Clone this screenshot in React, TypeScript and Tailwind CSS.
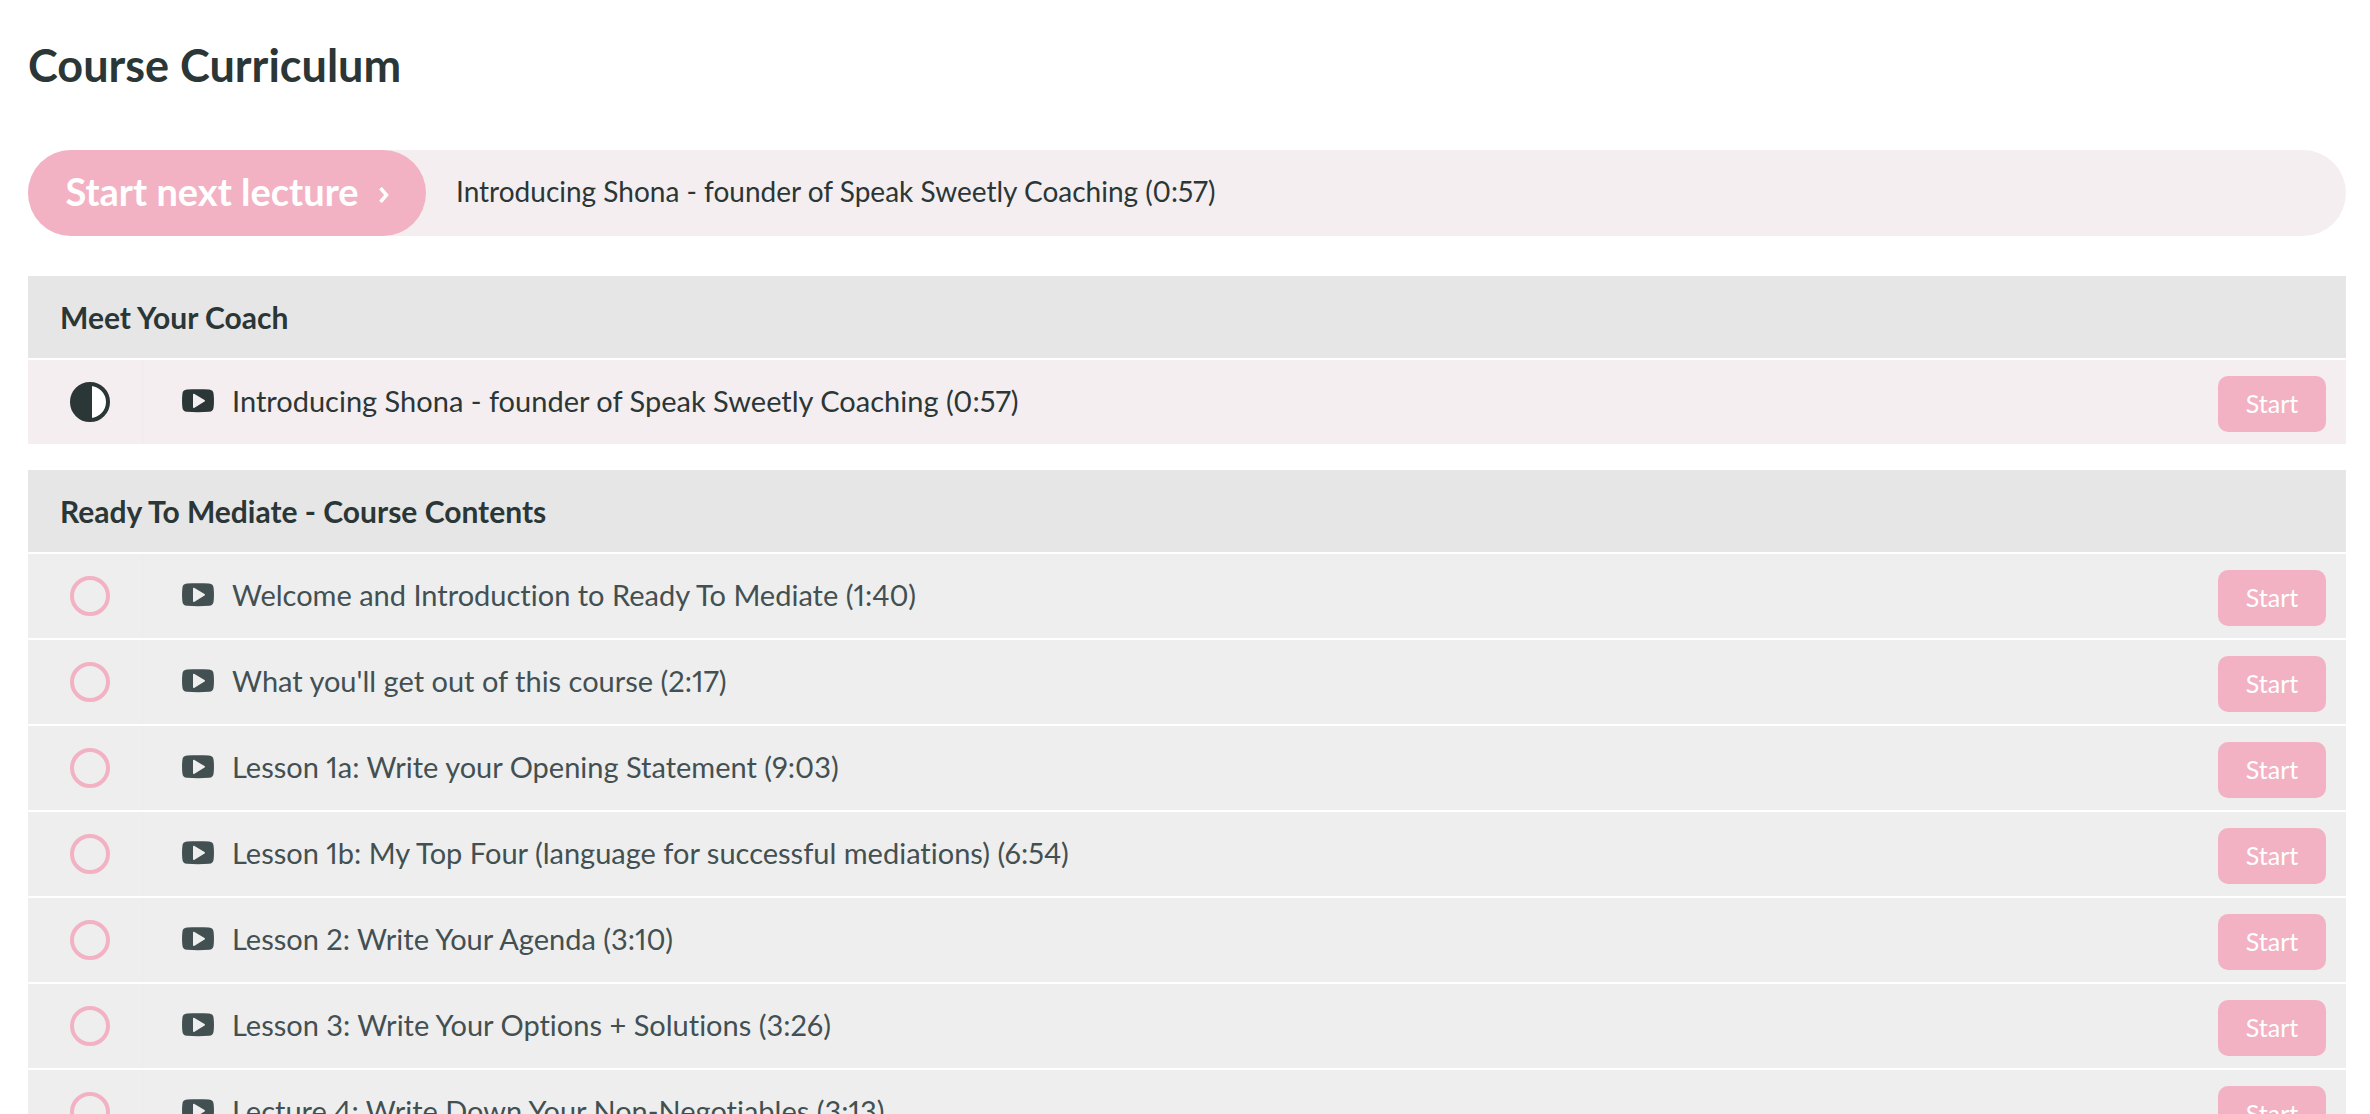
type Lecture = {
  title: string;
  current?: boolean;
};

const sections: { title: string; lectures: Lecture[] }[] = [
  {
    title: "Meet Your Coach",
    lectures: [
      {
        title: "Introducing Shona - founder of Speak Sweetly Coaching (0:57)",
        current: true,
      },
    ],
  },
  {
    title: "Ready To Mediate - Course Contents",
    lectures: [
      { title: "Welcome and Introduction to Ready To Mediate (1:40)" },
      { title: "What you'll get out of this course (2:17)" },
      { title: "Lesson 1a: Write your Opening Statement (9:03)" },
      {
        title:
          "Lesson 1b: My Top Four (language for successful mediations) (6:54)",
      },
      { title: "Lesson 2: Write Your Agenda (3:10)" },
      { title: "Lesson 3: Write Your Options + Solutions (3:26)" },
      { title: "Lecture 4: Write Down Your Non-Negotiables (3:13)" },
    ],
  },
];

function VideoIcon() {
  return (
    <svg
      viewBox="0 0 32 24"
      className="h-6 w-8 shrink-0"
      fill="currentColor"
      aria-hidden="true"
    >
      <path
        fillRule="evenodd"
        d="M5 .6C12 .1 20 .1 27 .6c3 .3 4.300 1.500 4.600 4.300.5 4.300.5 9.300 0 13.600-.3 2.800-1.600 4-4.600 4.300-7 .6-15 .6-22 0-3-.3-4.300-1.500-4.600-4.300-.5-4.300-.5-9.300 0-13.600C.7 2.100 2 .9 5 .6ZM11 5.800v12.200c0 1 .7 1.300 1.500.7l10-6.100c.7-.5.7-1 0-1.500l-10-6c-.8-.6-1.500-.3-1.500.7Z"
      />
    </svg>
  );
}

function StatusIcon({ current }: { current?: boolean }) {
  if (current) {
    return (
      <svg viewBox="0 0 40 40" className="size-10" aria-hidden="true">
        <circle cx="20" cy="20" r="18" fill="#fff" />
        <path d="M22 2H20a18 18 0 0 0 0 36h2Z" fill="#2b3636" />
        <circle
          cx="20"
          cy="20"
          r="18"
          fill="none"
          stroke="#2b3636"
          strokeWidth="4"
        />
      </svg>
    );
  }

  return <span className="size-10 rounded-full border-4 border-[#f2b2c4]" />;
}

function LectureRow({ title, current }: Lecture) {
  return (
    <li
      className={
        current
          ? "flex h-[84px] bg-[#f4eef0] text-[#2b3636]"
          : "flex h-[84px] bg-[#eeeeee] text-[#435052]"
      }
    >
      <div
        className={
          current
            ? "flex w-[116px] shrink-0 items-center border-r-2 border-[#f3ebed] pl-[42px]"
            : "flex w-[116px] shrink-0 items-center border-r-2 border-[#ededed] pl-[42px]"
        }
      >
        <StatusIcon current={current} />
      </div>
      <a
        href="#"
        className="flex flex-1 items-center gap-[18px] pb-0.5 pl-[38px]"
      >
        <VideoIcon />
        <span className="text-[29px]">{title}</span>
      </a>
      <button className="mt-4 mr-5 h-14 w-[108px] rounded-[10px] bg-[#f2b2c4] text-[25px] text-white">
        Start
      </button>
    </li>
  );
}

export default function App() {
  return (
    <main className="bg-white pt-9 pr-6 pl-7 font-['Lato',sans-serif] text-[#2b3636] [font-variant-ligatures:none] [font-variant-numeric:proportional-nums]">
      <h1 className="text-[45px] leading-[58px] font-bold">
        Course Curriculum
      </h1>

      <div className="mt-14 flex h-[86px] items-center rounded-full bg-[#f4eef0]">
        <button className="flex h-full w-[398px] items-center justify-center gap-5 rounded-full bg-[#f2b2c4] pb-1 text-[38px] font-bold text-white">
          Start next lecture
          <svg
            viewBox="0 0 10 16"
            className="mt-2 h-4 w-[10px]"
            fill="none"
            stroke="currentColor"
            strokeWidth="3.5"
            aria-hidden="true"
          >
            <path d="M1.500 1 7.500 8l-6 7" />
          </svg>
        </button>
        <a href="#" className="pb-1 pl-[30px] text-[28px]">
          Introducing Shona - founder of Speak Sweetly Coaching (0:57)
        </a>
      </div>

      <div className="mt-10 flex flex-col gap-[26px]">
        {sections.map((section) => (
          <section key={section.title}>
            <h2 className="flex h-[82px] items-center bg-[#e6e6e6] px-8 text-[30px] font-bold">
              {section.title}
            </h2>
            <ul className="mt-0.5 flex flex-col gap-0.5">
              {section.lectures.map((lecture) => (
                <LectureRow key={lecture.title} {...lecture} />
              ))}
            </ul>
          </section>
        ))}
      </div>
    </main>
  );
}
